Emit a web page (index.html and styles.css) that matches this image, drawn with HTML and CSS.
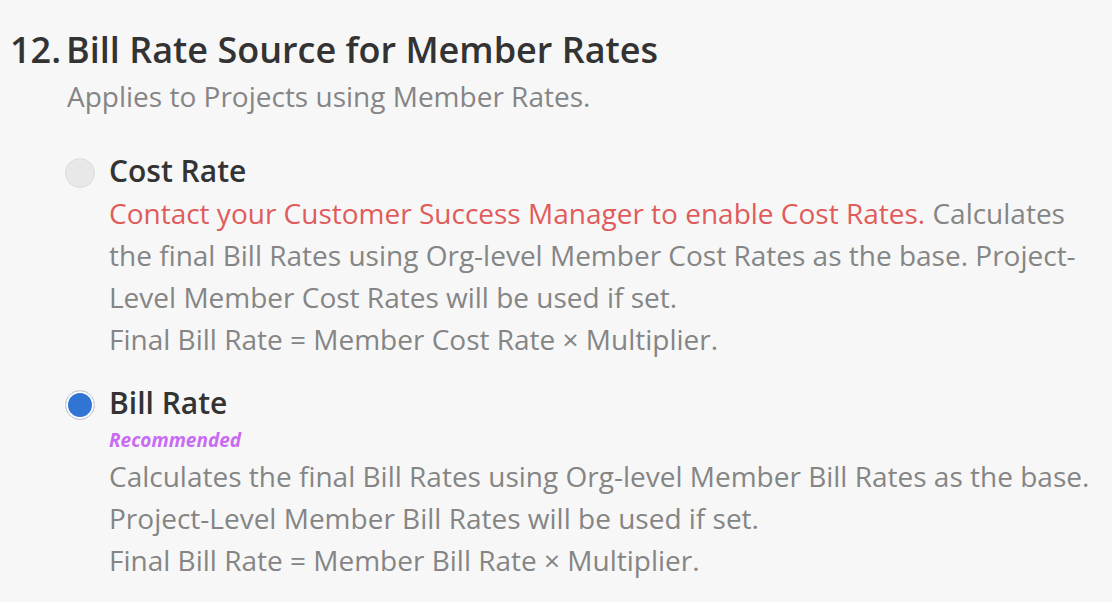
FILE: index.html
```html
<!DOCTYPE html>
<html lang="en">
<head>
<meta charset="utf-8">
<title>Bill Rate Source</title>
<link rel="stylesheet" href="styles.css">
</head>
<body>
<section class="setting">
  <h2 class="setting-title"><span class="setting-num">12.</span><span>Bill Rate Source for Member Rates</span></h2>
  <div class="setting-body">
    <p class="setting-desc">Applies to Projects using Member Rates.</p>
    <div class="options">
      <div class="option">
        <span class="radio radio-disabled"></span>
        <div class="option-text">
          <div class="option-label">Cost Rate</div>
          <p class="option-desc"><span class="warn">Contact your Customer Success Manager to enable Cost Rates.</span> Calculates the final Bill Rates using Org-level Member Cost Rates as the base. Project-Level Member Cost Rates will be used if set.<br>Final Bill Rate = Member Cost Rate × Multiplier.</p>
        </div>
      </div>
      <div class="option">
        <span class="radio radio-checked"></span>
        <div class="option-text">
          <div class="option-label">Bill Rate</div>
          <div class="badge">Recommended</div>
          <p class="option-desc">Calculates the final Bill Rates using Org-level Member Bill Rates as the base. Project-Level Member Bill Rates will be used if set.<br>Final Bill Rate = Member Bill Rate × Multiplier.</p>
        </div>
      </div>
    </div>
  </div>
</section>
</body>
</html>
```
FILE: styles.css
```css
html, body {
  margin: 0;
  padding: 0;
  background: #f7f7f7;
  font-family: "Open Sans", "Noto Sans", sans-serif;
}
.setting {
  padding: 28px 0 0 10px;
}
.setting-title {
  margin: 0;
  display: flex;
  font-size: 36px;
  font-weight: 600;
  line-height: 44px;
  color: #333333;
}
.setting-num {
  width: 56px;
  flex: none;
}
.setting-body {
  padding-left: 57px;
}
.setting-desc {
  margin: 4px 0 0;
  font-size: 28px;
  line-height: 40px;
  color: #858585;
}
.options {
  display: flex;
  flex-direction: column;
  gap: 22px;
  margin-top: 34px;
}
.option {
  display: flex;
  gap: 14px;
  margin-left: -2px;
}
.radio {
  flex: none;
  width: 30px;
  height: 30px;
  box-sizing: border-box;
  border-radius: 50%;
  margin-top: 8px;
}
.radio-disabled {
  background: #e8e8e8;
  border: 1.5px solid #dcdcdc;
}
.radio-checked {
  background: #3075d3;
  border: 1.5px solid #d6d6d6;
  box-shadow: inset 0 0 0 2px #ffffff;
}
.option-text {
  flex: 1;
  min-width: 0;
}
.option-label {
  font-size: 30px;
  font-weight: 600;
  line-height: 42px;
  color: #333333;
}
.badge {
  margin-top: 3px;
  font-size: 19px;
  font-weight: 700;
  font-style: italic;
  line-height: 26px;
  color: #c86cf2;
}
.badge + .option-desc {
  margin-top: 2px;
}
.option-desc {
  margin: 0;
  font-size: 28px;
  line-height: 42px;
  color: #858585;
}
.warn {
  color: #e05c5c;
}
```
